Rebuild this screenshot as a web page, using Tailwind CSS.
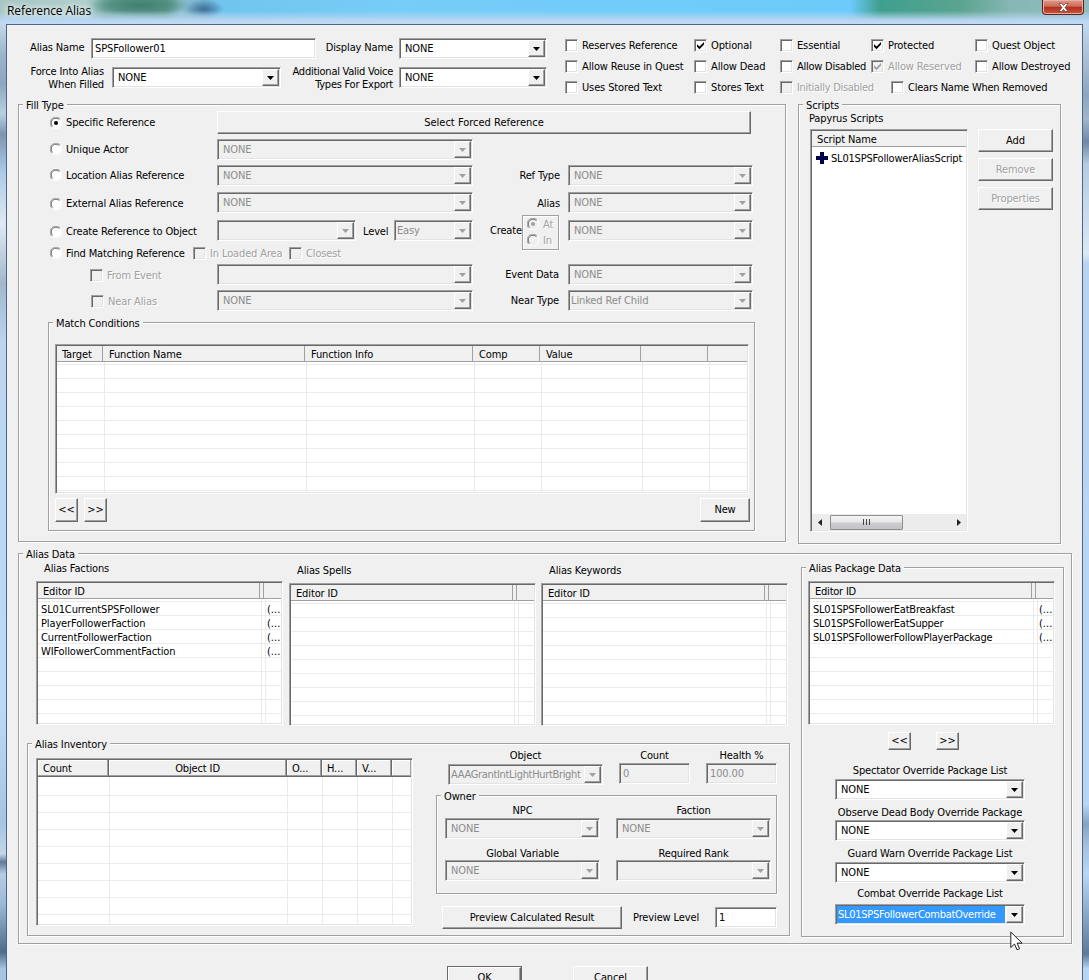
<!DOCTYPE html>
<html lang="en">
<head>
<meta charset="utf-8">
<title>Reference Alias</title>
<script src="https://cdn.jsdelivr.net/npm/@tailwindcss/browser@4"></script>
<script>
const SUNK = 'border border-t-[#a0a0a0] border-l-[#a0a0a0] border-r-white border-b-white p-px shadow-[inset_1px_1px_0_#696969,inset_-1px_-1px_0_#e3e3e3]';
const RAISED = 'border border-t-white border-l-white border-r-[#696969] border-b-[#696969] shadow-[inset_-1px_-1px_0_#a0a0a0] bg-[#f0f0f0]';
const add = (el, s) => s.split(' ').forEach(c => c && el.classList.add(c));
const def = (name, fn) => customElements.define(name, class extends HTMLElement {
  connectedCallback() { if (!this.done) { this.done = 1; fn(this, this.textContent.trim(), this.hasAttribute('off')); } }
});
function setup() {
  def('x-combo', (el, t, off) => {
    add(el, 'flex shrink-0 h-[21px] leading-[18px] overflow-hidden whitespace-nowrap ' + SUNK);
    add(el, off ? 'text-[#8c8c8c]' : 'bg-white');
    const sel = el.hasAttribute('sel');
    el.innerHTML = `<span class="flex-1 min-w-0 h-[17px] ${sel ? 'bg-[#3399ff] text-white mr-px pl-px' : el.hasAttribute('tight') ? 'pl-px' : 'pl-[4px]'}">${t}</span>
      <span class="flex items-center justify-center w-[17px] h-[17px] shrink-0 ${RAISED}"><svg class="w-[7px] h-[4px]" viewBox="0 0 7 4"><path d="M0 0h7L3.5 4z" fill="${off ? '#a0a0a0' : '#000'}"/></svg></span>`;
  });
  def('x-input', (el, t, off) => {
    add(el, 'block shrink-0 h-[21px] leading-[17px] whitespace-nowrap ' + SUNK);
    add(el, off ? 'text-[#8c8c8c]' : 'bg-white');
    el.innerHTML = `<span class="block pl-[2px]">${t}</span>`;
  });
  def('x-btn', (el, t, off) => {
    add(el, 'flex items-center justify-center shrink-0 whitespace-nowrap ' + RAISED);
    if (off) add(el, 'text-[#a0a0a0] [text-shadow:1px_1px_0_#fff]');
  });
  def('x-check', (el, t, off) => {
    const on = el.hasAttribute('on');
    add(el, 'flex items-center shrink-0 h-[13px] whitespace-nowrap');
    el.innerHTML = `<span class="w-[13px] h-[13px] shrink-0 mr-[4px] ${off ? '' : 'bg-white'} ${SUNK}">${on ? `<svg class="block w-[9px] h-[9px]" viewBox="0 0 9 9"><path d="M1 3.2v2.6L3.5 8.2 8 3.6V1L3.5 5.4z" fill="${off ? '#a0a0a0' : '#000'}"/></svg>` : ''}</span><span class="pt-px ${off ? 'text-[#a0a0a0] [text-shadow:1px_1px_0_#fff]' : ''}">${t}</span>`;
  });
  def('x-radio', (el, t, off) => {
    const on = el.hasAttribute('on');
    add(el, 'flex items-center shrink-0 h-[12px] whitespace-nowrap');
    el.innerHTML = `<svg class="w-[12px] h-[12px] shrink-0 mr-[4px]" viewBox="0 0 12 12"><circle cx="6" cy="6" r="5" fill="${off ? '#f0f0f0' : '#fff'}"/><path d="M1.8 10.2A5.6 5.6 0 0 1 10.2 1.8" fill="none" stroke="#a0a0a0"/><path d="M2.6 9.4A4.6 4.6 0 0 1 9.4 2.6" fill="none" stroke="#696969"/><path d="M10.2 1.8A5.6 5.6 0 0 1 1.8 10.2" fill="none" stroke="#fff"/>${on ? `<circle cx="6" cy="6" r="2" fill="${off ? '#a0a0a0' : '#000'}"/>` : ''}</svg><span class="pt-px ${off ? 'text-[#a0a0a0] [text-shadow:1px_1px_0_#fff]' : ''}">${t}</span>`;
  });
  def('x-grid', (el) => {
    const heads = el.getAttribute('heads').split('|').map(h => h.split(':'));
    const rows = (el.getAttribute('rows') || '').split('|').filter(Boolean);
    const inv = el.hasAttribute('inv');
    const step = inv ? 17 : 14, off = inv ? 18 : 2;
    add(el, 'flex flex-col shrink-0 bg-white overflow-hidden whitespace-nowrap ' + SUNK);
    const head = heads.map(([t, w], i) => {
      const last = i === heads.length - 1;
      const deco = inv ? 'border-b border-b-[#696969] shadow-[inset_-1px_-1px_0_#a0a0a0,inset_1px_1px_0_#fff]' + (last ? '' : ' border-r border-r-[#696969]')
                       : 'border-b border-[#a0a0a0]' + (last ? '' : ' border-r');
      return `<span class="overflow-hidden bg-[#f0f0f0] ${deco} ${last ? 'flex-1' : 'shrink-0'} ${t === 'Object ID' ? 'text-center' : +w > 10 ? (i && !inv ? 'pl-[6px]' : 'pl-[5px]') : ''}" style="${last ? '' : 'width:' + w + 'px'}">${t}</span>`;
    }).join('');
    const cols = heads.slice(0, -1).map(([t, w], i) => `<span class="shrink-0 border-r border-[#ebebeb]" style="width:${+w + (i === 0 ? (inv ? 1 : 2) : 0)}px"></span>`).join('');
    const body = rows.map(r => `<div class="flex h-[14px] leading-[14px]"><span class="pl-[3px] shrink-0" style="width:${+heads[0][1] + 7}px">${r}</span><span class="tracking-normal">(...</span></div>`).join('');
    el.innerHTML = `<div class="flex shrink-0 ${inv ? 'h-[17px] leading-[18px]' : 'h-[16px] leading-[18px]'}">${head}</div>
      <div class="grid flex-1 min-h-0 overflow-hidden">
        <div class="col-start-1 row-start-1" style="margin-top:${off}px;background:repeating-linear-gradient(#ebebeb 0 1px,#fff 1px ${step}px)"></div>
        <div class="col-start-1 row-start-1 flex">${cols}</div>
        <div class="col-start-1 row-start-1 pt-[4px]">${body}</div>
      </div>`;
  });
  def('x-legend', (el) => add(el, 'block w-fit shrink-0 h-[14px] leading-[15px] -mt-[7px] mb-[-1px] ml-[4px] px-[3px] bg-[#f0f0f0] whitespace-nowrap'));
}
document.addEventListener('DOMContentLoaded', setup);
</script>
</head>
<body class="w-[1089px] h-[980px] overflow-hidden bg-[#bcd5ee] text-black text-[11px] leading-[14px] tracking-[-0.13px] font-['DejaVu_Sans_Condensed','DejaVu_Sans',sans-serif]">
<div class="relative flex flex-col w-[1089px] h-[980px] overflow-hidden">

  <header class="flex justify-between h-[24px] shrink-0 pl-[7px] pr-[5px] bg-[linear-gradient(to_bottom,transparent_0,transparent_45%,#b9d6f2_85%,#c4dbf2_100%),radial-gradient(ellipse_20px_9px_at_204px_9px,#3f6f98_0,transparent_100%),radial-gradient(ellipse_50px_12px_at_140px_5px,#3f7f6c_0,#4d8a7ccc_60%,transparent_100%),linear-gradient(to_right,#a9c6c4_0,#b0d0cc_85px,#7fb0a8_105px,#6aa596_165px,#8fc0d0_180px,#6fb0d0_205px,#6fc5ee_220px,#76cdf7_400px,#6ccbfa_850px,#3f9f8e_880px,#5aa48f_960px,#86b7b4_1010px,#93bcc0_1089px)]">
    <h1 class="font-['Open_Sans','Noto_Sans',sans-serif] text-[12px] tracking-[-0.1px] leading-[16px] mt-[3px] whitespace-nowrap [text-shadow:0_0_6px_#fff,0_0_6px_#fff]">Reference Alias</h1>
    <div class="flex items-center justify-center w-[42px] h-[15px] rounded-b-[4px] border border-t-0 border-[#5b2320] bg-[linear-gradient(#dc9a8c_0,#cf6c58_45%,#b02f1c_50%,#c9553f_100%)] shadow-[inset_0_0_0_1px_#e8b0a4]">
      <svg class="w-[11px] h-[9px]" viewBox="0 0 11 9"><path d="M1 .5h2.8L5.5 2.6 7.2.5H10L7 4.5l3 4H7.2L5.500 6.400 3.800 8.500H1l3-4z" fill="#fff" stroke="#6b3a3a" stroke-width=".7"/></svg>
    </div>
  </header>

  <div class="flex flex-1 min-h-0">
    <div class="w-[6px] shrink-0 bg-[linear-gradient(#c3d8ec_0,#9db4cb_30px,#8ea6be_60px,#b9cfe4_90px,#7d96b0_110px,#aecbe8_150px,#dfe9f2_200px,#a2b7cd_260px,#bcd6f0_320px,#bcd9f7_680px,#a7c4e2_800px,#c2d6ea_830px,#5f7a98_838px,#b5cde6_850px,#9db9d6_880px,#4f6b8a_928px,#a9c4e0_945px)]"></div>
    <main class="flex flex-col flex-1 min-w-0 bg-[#f0f0f0] border-l border-t border-r border-[#4a6585]">

      <section class="flex mt-[13px] h-[66px] shrink-0">
        <div class="w-[540px] shrink-0">
          <div class="flex h-[21px] items-start">
            <label class="ml-[23px] w-[61px] leading-[19px]">Alias Name</label>
            <x-input class="w-[225px]">SPSFollower01</x-input>
            <label class="w-[77px] text-right leading-[19px]">Display Name</label>
            <x-combo class="ml-[6px] w-[148px]">NONE</x-combo>
          </div>
          <div class="flex h-[21px] mt-[8px] items-center">
            <label class="w-[97px] text-right leading-[13px]">Force Into Alias<br>When Filled</label>
            <x-combo class="ml-[8px] w-[169px]">NONE</x-combo>
            <label class="w-[112px] text-right leading-[13px] tracking-[-0.25px]">Additional Valid Voice<br>Types For Export</label>
            <x-combo class="ml-[6px] w-[148px]">NONE</x-combo>
          </div>
        </div>
        <div class="flex flex-col gap-[8px] ml-[18px] mt-px">
          <div class="flex"><x-check class="w-[129px]">Reserves Reference</x-check><x-check on class="w-[86px]">Optional</x-check><x-check class="w-[91px]">Essential</x-check><x-check on class="w-[104px]">Protected</x-check><x-check>Quest Object</x-check></div>
          <div class="flex"><x-check class="w-[129px]">Allow Reuse in Quest</x-check><x-check class="w-[86px]">Allow Dead</x-check><x-check class="w-[91px] tracking-[-0.25px]">Allow Disabled</x-check><x-check on off class="w-[104px]">Allow Reserved</x-check><x-check>Allow Destroyed</x-check></div>
          <div class="flex"><x-check class="w-[129px]">Uses Stored Text</x-check><x-check class="w-[86px]">Stores Text</x-check><x-check off class="w-[111px] tracking-[-0.3px]">Initially Disabled</x-check><x-check class="tracking-[-0.22px]">Clears Name When Removed</x-check></div>
        </div>
      </section>

      <div class="flex items-start h-[449px] shrink-0 ml-[11px]">
        <!-- Fill Type -->
        <section class="flex flex-col w-[768px] h-[438px] shrink-0 border border-[#a0a0a0] shadow-[1px_1px_0_#fff,inset_1px_1px_0_#fff]">
          <x-legend>Fill Type</x-legend>
          <div class="flex items-center h-[23px]">
            <x-radio on class="ml-[31px] w-[167px]">Specific Reference</x-radio>
            <x-btn class="w-[534px] h-[23px] tracking-normal">Select Forced Reference</x-btn>
          </div>
          <div class="flex items-center h-[21px] mt-[5px]">
            <x-radio class="ml-[31px] w-[167px] -mt-px">Unique Actor</x-radio>
            <x-combo off class="w-[256px]">NONE</x-combo>
          </div>
          <div class="flex items-center h-[21px] mt-[5px]">
            <x-radio class="ml-[31px] w-[167px] -mt-px">Location Alias Reference</x-radio>
            <x-combo off class="w-[256px]">NONE</x-combo>
            <label class="w-[87px] text-right">Ref Type</label>
            <x-combo off class="ml-[8px] w-[185px]">NONE</x-combo>
          </div>
          <div class="flex items-center h-[21px] mt-[6px]">
            <x-radio class="ml-[31px] mt-[2px] w-[167px]">External Alias Reference</x-radio>
            <x-combo off class="w-[256px]">NONE</x-combo>
            <label class="w-[87px] mt-[3px] text-right">Alias</label>
            <x-combo off class="ml-[8px] w-[185px]">NONE</x-combo>
          </div>
          <div class="flex items-center h-[21px] mt-[7px]">
            <x-radio class="ml-[31px] mt-[2px] w-[167px]">Create Reference to Object</x-radio>
            <x-combo off class="w-[139px]"></x-combo>
            <label class="w-[38px] pl-[7px] mt-[3px]">Level</label>
            <x-combo off tight class="w-[79px]">Easy</x-combo>
            <label class="w-[49px] text-right">Create</label>
            <div class="flex flex-col justify-center gap-[4px] w-[37px] h-[35px] mt-[3px] pl-[4px] border border-[#a0a0a0] shadow-[inset_1px_1px_0_#fff,1px_1px_0_#fff]">
              <x-radio on off>At</x-radio>
              <x-radio off>In</x-radio>
            </div>
            <x-combo off class="ml-[9px] w-[185px]">NONE</x-combo>
          </div>
          <div class="flex items-center h-[22px] mt-px">
            <x-radio class="ml-[31px] w-[143px]">Find Matching Reference</x-radio>
            <x-check off class="w-[96px]">In Loaded Area</x-check>
            <x-check off>Closest</x-check>
          </div>
          <div class="flex items-center h-[21px]">
            <x-check off class="ml-[71px] mt-[2px] w-[127px]">From Event</x-check>
            <x-combo off class="w-[256px]"></x-combo>
            <label class="w-[86px] text-right">Event Data</label>
            <x-combo off class="ml-[9px] w-[185px]">NONE</x-combo>
          </div>
          <div class="flex items-center h-[21px] mt-[5px]">
            <x-check off class="ml-[72px] mt-[2px] w-[126px]">Near Alias</x-check>
            <x-combo off class="w-[256px]">NONE</x-combo>
            <label class="w-[86px] text-right">Near Type</label>
            <x-combo off tight class="ml-[9px] w-[185px]">Linked Ref Child</x-combo>
          </div>
          <section class="flex flex-col w-[707px] h-[209px] ml-[29px] mt-[11px] border border-[#a0a0a0] shadow-[1px_1px_0_#fff,inset_1px_1px_0_#fff]">
            <x-legend>Match Conditions</x-legend>
            <x-grid class="mt-[15px] ml-[6px] w-[694px] h-[150px]" heads="Target:46|Function Name:202|Function Info:168|Comp:67|Value:101|:67|:0"></x-grid>
            <div class="flex mt-[4px] ml-[6px]">
              <x-btn class="w-[23px] h-[24px]">&lt;&lt;</x-btn>
              <x-btn class="ml-[6px] w-[23px] h-[24px]">&gt;&gt;</x-btn>
              <x-btn class="ml-[593px] w-[50px] h-[24px]">New</x-btn>
            </div>
          </section>
        </section>

        <!-- Scripts -->
        <section class="flex flex-col w-[263px] h-[440px] ml-[12px] shrink-0 border border-[#a0a0a0] shadow-[1px_1px_0_#fff,inset_1px_1px_0_#fff]">
          <x-legend>Scripts</x-legend>
          <label class="ml-[10px] h-[14px] leading-[15px]">Papyrus Scripts</label>
          <div class="flex mt-[4px] ml-[11px]">
            <div class="flex flex-col w-[158px] h-[403px] bg-white border border-t-[#a0a0a0] border-l-[#a0a0a0] border-r-white border-b-white p-px shadow-[inset_1px_1px_0_#696969,inset_-1px_-1px_0_#e3e3e3]">
              <div class="h-[16px] leading-[18px] pl-[5px] bg-[#f0f0f0] border-b border-[#a0a0a0]">Script Name</div>
              <div class="flex items-center mt-[4px] ml-[4px] h-[14px] whitespace-nowrap tracking-[-0.2px]">
                <svg class="w-[12px] h-[12px] mr-[3px] shrink-0" viewBox="0 0 12 12"><path d="M4 0h4v4h4v4H8v4H4V8H0V4h4z" fill="#00004a"/></svg><span class="pt-[2px]">SL01SPSFollowerAliasScript</span>
              </div>
              <div class="flex-1"></div>
              <div class="flex items-center h-[16px] bg-[#ececec]">
                <svg class="w-[4px] h-[7px] ml-[6px]" viewBox="0 0 4 7"><path d="M4 0v7L0 3.500z" fill="#222"/></svg>
                <div class="flex items-center justify-center gap-[2px] ml-[8px] w-[73px] h-[15px] border border-[#8e8f8f] rounded-[1px] bg-[linear-gradient(#f5f5f5_0,#e6e6e6_48%,#cfcfd2_52%,#c2c3c6_100%)]">
                  <span class="w-px h-[6px] bg-[#444]"></span><span class="w-px h-[6px] bg-[#444]"></span><span class="w-px h-[6px] bg-[#444]"></span>
                </div>
                <svg class="w-[4px] h-[7px] ml-[54px]" viewBox="0 0 4 7"><path d="M0 0v7l4-3.500z" fill="#222"/></svg>
              </div>
            </div>
            <div class="flex flex-col gap-[6px] ml-[10px]">
              <x-btn class="w-[75px] h-[23px]">Add</x-btn>
              <x-btn off class="w-[75px] h-[23px]">Remove</x-btn>
              <x-btn off class="w-[75px] h-[23px]">Properties</x-btn>
            </div>
          </div>
        </section>
      </div>

      <!-- Alias Data -->
      <section class="flex flex-col w-[1054px] h-[391px] ml-[11px] shrink-0 border border-[#a0a0a0] shadow-[1px_1px_0_#fff,inset_1px_1px_0_#fff]">
        <x-legend>Alias Data</x-legend>
        <div class="flex items-start">
          <div class="w-[782px] shrink-0">
            <div class="flex items-start h-[183px]">
              <div class="flex flex-col w-[247px] ml-[17px] pt-[2px]">
                <label class="ml-[8px]">Alias Factions</label>
                <x-grid class="mt-[5px] h-[144px]" heads="Editor ID:222|:4|:0" rows="SL01CurrentSPSFollower|PlayerFollowerFaction|CurrentFollowerFaction|WIFollowerCommentFaction"></x-grid>
              </div>
              <div class="flex flex-col w-[247px] ml-[6px] pt-[4px]">
                <label class="ml-[8px]">Alias Spells</label>
                <x-grid class="mt-[5px] h-[143px]" heads="Editor ID:222|:4|:0"></x-grid>
              </div>
              <div class="flex flex-col w-[247px] ml-[5px] pt-[4px]">
                <label class="ml-[8px]">Alias Keywords</label>
                <x-grid class="mt-[5px] h-[143px]" heads="Editor ID:222|:4|:0"></x-grid>
              </div>
            </div>
            <section class="flex flex-col w-[763px] h-[193px] ml-[8px] border border-[#a0a0a0] shadow-[1px_1px_0_#fff,inset_1px_1px_0_#fff]">
              <x-legend>Alias Inventory</x-legend>
              <div class="flex items-start">
                <x-grid inv class="ml-[8px] mt-[8px] w-[377px] h-[168px]" heads="Count:71|Object ID:178|O...:35|H...:35|V...:35|:0"></x-grid>
                <div class="flex flex-col w-[341px] ml-[23px] -mt-px">
                  <div class="flex items-start text-center">
                    <div class="w-[155px] ml-[12px]"><div class="mb-px">Object</div><x-combo off tight class="text-left tracking-[-0.33px]">AAAGrantIntLightHurtBright</x-combo></div>
                    <div class="w-[71px] ml-[16px]"><div>Count</div><x-input off class="text-left">0</x-input></div>
                    <div class="w-[71px] ml-[16px]"><div>Health %</div><x-input off class="text-left">100.00</x-input></div>
                  </div>
                  <section class="flex flex-col h-[99px] mt-[10px] border border-[#a0a0a0] shadow-[1px_1px_0_#fff,inset_1px_1px_0_#fff]">
                    <x-legend>Owner</x-legend>
                    <div class="grid grid-cols-[155px_155px] gap-x-[16px] ml-[8px] mt-[2px] text-center">
                      <div>NPC</div><div>Faction</div>
                      <x-combo off class="text-left">NONE</x-combo><x-combo off class="text-left">NONE</x-combo>
                      <div class="mt-[8px] -mb-px">Global Variable</div><div class="mt-[8px] -mb-px">Required Rank</div>
                      <x-combo off class="text-left">NONE</x-combo><x-combo off class="text-left"></x-combo>
                    </div>
                  </section>
                  <div class="flex items-center mt-[12px] ml-[6px]">
                    <x-btn class="w-[180px] h-[23px]">Preview Calculated Result</x-btn>
                    <label class="w-[82px] ml-[11px] pt-px">Preview Level</label>
                    <x-input class="w-[62px]">1</x-input>
                  </div>
                </div>
              </div>
            </section>
          </div>

          <section class="flex flex-col w-[263px] h-[370px] mt-[7px] shrink-0 border border-[#a0a0a0] shadow-[1px_1px_0_#fff,inset_1px_1px_0_#fff]">
            <x-legend>Alias Package Data</x-legend>
            <x-grid class="mt-[7px] ml-[6px] w-[247px] h-[144px] tracking-[-0.22px]" heads="Editor ID:222|:4|:0" rows="SL01SPSFollowerEatBreakfast|SL01SPSFollowerEatSupper|SL01SPSFollowerFollowPlayerPackage"></x-grid>
            <div class="flex mt-[7px] ml-[86px] gap-[25px]">
              <x-btn class="w-[23px] h-[18px]">&lt;&lt;</x-btn>
              <x-btn class="w-[23px] h-[18px]">&gt;&gt;</x-btn>
            </div>
            <div class="flex flex-col w-[190px] ml-[33px] mt-[14px] text-center whitespace-nowrap">
              <div>Spectator Override Package List</div>
              <x-combo class="mt-px text-left">NONE</x-combo>
              <div class="mt-[6px]">Observe Dead Body Override Package</div>
              <x-combo class="text-left">NONE</x-combo>
              <div class="mt-[6px]">Guard Warn Override Package List</div>
              <x-combo class="mt-px text-left">NONE</x-combo>
              <div class="mt-[4px]">Combat Override Package List</div>
              <x-combo sel class="mt-[3px] text-left tracking-[-0.28px]">SL01SPSFollowerCombatOverride</x-combo>
            </div>
          </section>
        </div>
      </section>

      <div class="flex mt-[22px] ml-[440px] shrink-0">
        <div class="flex border border-[#696969]"><x-btn class="w-[73px] h-[21px]">OK</x-btn></div>
        <x-btn class="ml-[51px] w-[75px] h-[23px]">Cancel</x-btn>
      </div>
    </main>
    <div class="w-[6px] shrink-0 bg-[linear-gradient(#c3d8ec_0,#8ea6be_70px,#9fb6cc_95px,#6f88a4_118px,#b5cbe0_140px,#dce8f4_230px,#b8d3ef_240px,#b8d6f5_780px,#86a3c0_800px,#a3bfdc_820px,#b8d6f5_850px,#5f7a98_930px,#b8d6f5_945px)]"></div>
  </div>

  <svg class="absolute left-[1010px] top-[931px] w-[13px] h-[20px]" viewBox="0 0 13 20"><path d="M.8 1v15.500l3.700-3.500 2.500 5.800 2.600-1.100-2.500-5.600h5z" fill="#fff" stroke="#222" stroke-width="1"/></svg>
</div>
</body>
</html>
